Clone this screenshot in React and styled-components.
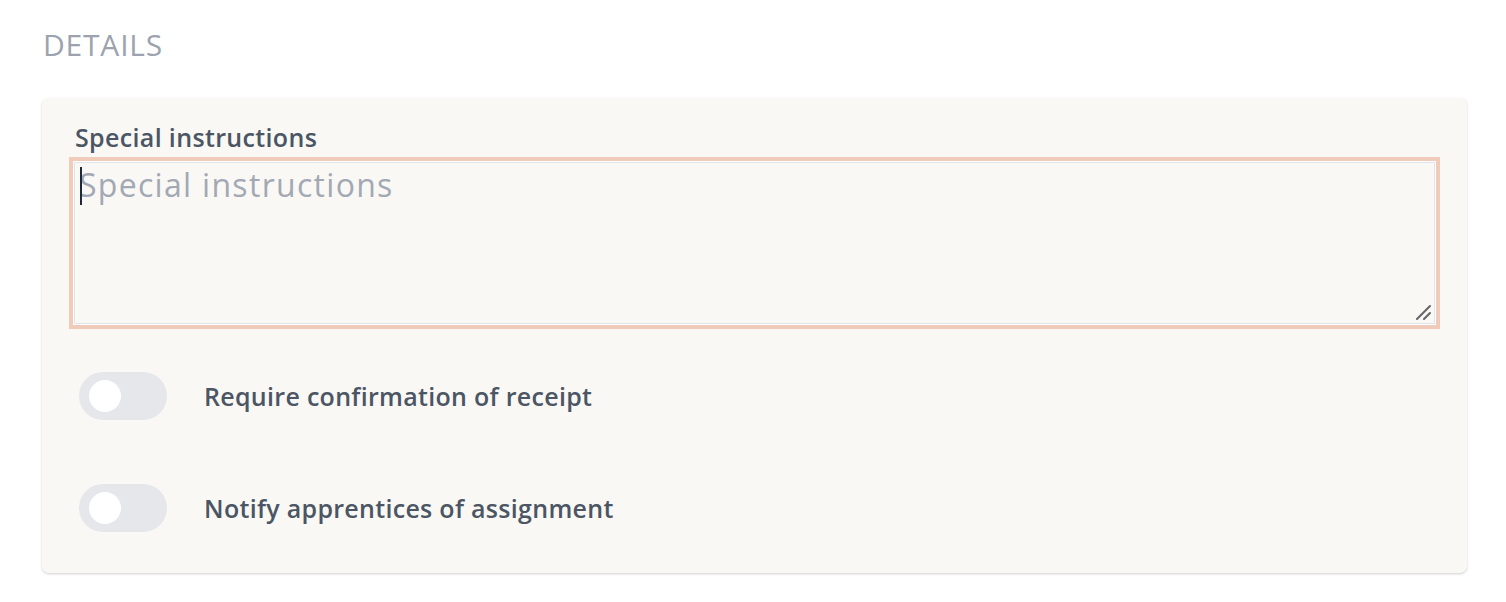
import React from 'react';
import styled, { createGlobalStyle } from 'styled-components';

const GlobalStyle = createGlobalStyle`
  html, body {
    margin: 0;
    padding: 0;
    background: #ffffff;
  }

  body {
    font-family: "Open Sans", "Liberation Sans", sans-serif;
    -webkit-font-smoothing: antialiased;
  }

  * {
    box-sizing: border-box;
  }
`;

const Page = styled.div`
  padding: 27px 39px 28px 42px;
`;

const Heading = styled.h2`
  margin: 0 0 35px 1px;
  font-size: 30px;
  font-weight: 400;
  line-height: 36px;
  letter-spacing: 0.8px;
  color: #9ca3af;
  text-transform: uppercase;
`;

const Card = styled.section`
  background-color: #f9f8f5;
  border-radius: 7px;
  box-shadow: 0 1px 3px rgba(0, 0, 0, 0.13), 0 1px 2px rgba(0, 0, 0, 0.06);
  padding: 24px 27px 41px;
`;

const Label = styled.label`
  display: block;
  margin: 0 0 5px 6px;
  font-size: 25px;
  font-weight: 600;
  line-height: 30px;
  letter-spacing: 0.35px;
  color: #4b5563;
`;

const Field = styled.div`
  position: relative;
  border: 4px solid #f0cbb9;
  padding: 1px;
  background: #ffffff;
`;

const TextArea = styled.textarea`
  display: block;
  width: 100%;
  height: 162px;
  margin: 0;
  padding: 2px 4px 0;
  border: 1px solid #e3e4e9;
  background-color: #f9f8f5;
  font-family: inherit;
  font-size: 32px;
  font-weight: 400;
  line-height: 40px;
  letter-spacing: 1.3px;
  color: #374151;
  outline: none;
  resize: none;

  &::placeholder {
    color: #a3a8b4;
  }
`;

const Caret = styled.span`
  position: absolute;
  left: 7px;
  top: 6px;
  width: 2px;
  height: 38px;
  background: #1f2937;
`;

const Grip = styled.svg`
  position: absolute;
  right: 5px;
  bottom: 5px;
  width: 16px;
  height: 16px;
  pointer-events: none;
`;

const Options = styled.div`
  display: flex;
  flex-direction: column;
  gap: 64px;
  margin: 43px 0 0 10px;
`;

const OptionRow = styled.div`
  display: flex;
  align-items: center;
  gap: 37px;
`;

const Track = styled.button`
  position: relative;
  flex: none;
  width: 88px;
  height: 48px;
  padding: 0;
  border: none;
  border-radius: 24px;
  background-color: ${(p) => (p.$on ? '#e58b60' : '#e5e7eb')};
  cursor: pointer;
`;

const Knob = styled.span`
  position: absolute;
  top: 8px;
  left: ${(p) => (p.$on ? '48px' : '10px')};
  width: 32px;
  height: 32px;
  border-radius: 50%;
  background: #ffffff;
`;

const OptionText = styled.span`
  font-size: 25px;
  font-weight: 600;
  line-height: 30px;
  letter-spacing: 0.3px;
  color: #4b5563;
`;

const Toggle = ({ on, label }) => (
  <OptionRow>
    <Track type="button" role="switch" aria-checked={on} $on={on}>
      <Knob $on={on} />
    </Track>
    <OptionText>{label}</OptionText>
  </OptionRow>
);

const App = () => (
  <>
    <GlobalStyle />
    <Page>
      <Heading>Details</Heading>
      <Card>
        <Label htmlFor="special">Special instructions</Label>
        <Field>
          <TextArea id="special" placeholder="Special instructions" />
          <Caret />
          <Grip viewBox="0 0 16 16">
            <path d="M2 15 L15 2 M9 15 L15 9" stroke="#666" strokeWidth="2" strokeLinecap="round" />
          </Grip>
        </Field>
        <Options>
          <Toggle on={false} label="Require confirmation of receipt" />
          <Toggle on={false} label="Notify apprentices of assignment" />
        </Options>
      </Card>
    </Page>
  </>
);

export default App;
